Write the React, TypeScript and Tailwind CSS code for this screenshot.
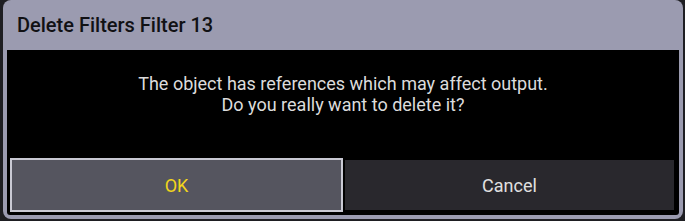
export default function App() {
  return (
    <div className="w-[685px] h-[221px] bg-[#1e1e22] pl-[3px] pr-[2px] pb-[2px] font-['Roboto',sans-serif]">
      <div className="flex flex-col h-full rounded-[8px] bg-[#9b9bb0] px-[4px] pb-[4px]">
        <div className="h-[50px] flex items-center pl-[10px]">
          <h1 className="text-[20px] font-medium text-[#111114] leading-none">Delete Filters Filter 13</h1>
        </div>
        <div className="flex-1 flex flex-col bg-black rounded-b-[3px]">
          <div className="flex-1 pt-[23px] text-center text-[18px] leading-[21px] text-[#dcdcdc]">
            <p>The object has references which may affect output.</p>
            <p>Do you really want to delete it?</p>
          </div>
          <div className="flex h-[54px] px-[3px] mb-[3px]">
            <button className="flex-1 flex items-center justify-center border-2 border-[#c9c9d3] bg-[#55555f] text-[18px] text-[#f2d51c]">
              OK
            </button>
            <button className="flex-1 flex items-center justify-center border-2 border-black bg-[#29282d] text-[18px] text-[#e0e0e0]">
              Cancel
            </button>
          </div>
        </div>
      </div>
    </div>
  )
}
